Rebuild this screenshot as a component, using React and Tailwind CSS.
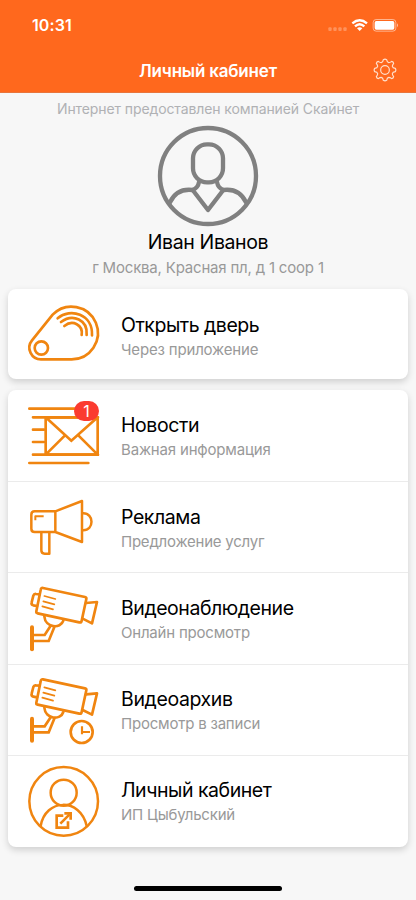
import React from "react";

function StatusBar() {
  return (
    <div className="flex h-[48px] items-start justify-between pl-8 pr-[17px] pt-[15px] text-white">
      <span className="text-[16px] font-semibold leading-[21px] tracking-[0.1px]">10:31</span>
      <svg className="mt-[2px] h-[17px] w-[72px]" viewBox="0 0 216 51" fill="none">
        <g fill="#fff" fillOpacity=".28">
          <rect x="4" y="31" width="10" height="11" rx="3" />
          <rect x="19" y="31" width="10" height="11" rx="3" />
          <rect x="34" y="31" width="10" height="11" rx="3" />
          <rect x="49" y="31" width="10" height="11" rx="3" />
        </g>
        <g stroke="#fff" strokeWidth="7">
          <path d="M76 19Q98 0 120 19" />
          <path d="M84 28Q98 15 112 28" />
        </g>
        <path d="M90 34Q98 27 106 34L98 42Z" fill="#fff" />
        <rect x="138.500" y="7.500" width="68" height="35" rx="9" stroke="#fff" strokeOpacity=".5" strokeWidth="3" />
        <rect x="143" y="12" width="59" height="26" rx="5" fill="#fff" />
        <path d="M210 19q6 6 0 12Z" fill="#fff" fillOpacity=".6" />
      </svg>
    </div>
  );
}

function GearIcon() {
  return (
    <svg className="h-6 w-6" viewBox="0 0 72 72" fill="none" stroke="#ffe0ce" strokeWidth="3.500" strokeLinejoin="round">
      <circle cx="36" cy="36" r="13" />
      <path d="M31 5Q36 2 41 5Q42 13 47 14Q51 14 56 10Q61 11 62 16Q58 21 58 25Q59 30 67 31Q70 36 67 41Q59 42 58 47Q58 51 62 56Q61 61 56 62Q51 58 47 58Q42 59 41 67Q36 70 31 67Q30 59 25 58Q21 58 16 62Q11 61 10 56Q14 51 14 47Q13 42 5 41Q2 36 5 31Q13 30 14 25Q14 21 10 16Q11 11 16 10Q21 14 25 14Q30 13 31 5Z" />
    </svg>
  );
}

function Avatar() {
  return (
    <svg className="h-[102px] w-[102px]" viewBox="51 15 306 306" fill="none" stroke="#808080" strokeWidth="13" strokeLinecap="round" strokeLinejoin="round">
      <circle cx="204" cy="168" r="144" />
      <rect x="159" y="73" width="90" height="114" rx="42" />
      <path d="M177 186Q174 204 158 210L204 270L250 210Q234 204 231 186" />
      <path d="M158 210Q110 204 90 247M250 210Q298 204 318 247" />
    </svg>
  );
}

function Icon({ viewBox, children }) {
  return (
    <svg className="h-[90px] w-[90px] shrink-0" viewBox={viewBox} fill="none" stroke="#f08510" strokeWidth="8" strokeLinecap="round" strokeLinejoin="round">
      {children}
    </svg>
  );
}

function KeyFob() {
  return (
    <Icon viewBox="72 27 270 270">
      <path d="M158 104A79 79 0 1 1 214 238H124A35 35 0 0 1 96 181Z" />
      <circle cx="124" cy="204" r="20" />
      <path d="M173 115C211 82 279 103 276 166M183 126C219 99 264 120 260 165M193 138C218 118 250 135 245 165" />
    </Icon>
  );
}

function Mail() {
  return (
    <Icon viewBox="72 15 270 270">
      <path d="M88 71H270M99 97H294M99 134H132M99 171H132M99 209H294M88 234H265" />
      <path strokeLinejoin="miter" d="M137 97H293V209H137ZM137 97L214 167L293 97M137 209L195 151M293 209L235 151" />
    </Icon>
  );
}

function Megaphone() {
  return (
    <Icon viewBox="72 6 270 270">
      <g strokeWidth="7.500">
        <path d="M104 94H166V156H104Q94 156 94 146V104Q94 94 104 94ZM166 94L246 63V186L166 156M249 100C283 99 283 152 249 151" />
        <path d="M124 157V211Q124 221 134 221H148V157" />
        <path d="M106 121V109H131" strokeLinecap="butt" strokeWidth="6" />
      </g>
    </Icon>
  );
}

function CameraShape() {
  return (
    <>
      <path d="M129 54L255 81Q260 82 259 87L245 152Q244 158 238 157L113 130Q108 129 109 124L122 60Q123 53 129 54Z" />
      <path d="M119 73L108 72Q102 71 100 77L95 97Q93 104 100 106L111 108M258 99L291 96L276 160L248 146" />
      <path d="M133 139C136 174 182 178 190 152M151 169L134 195H96M164 169L146 213H96" strokeLinejoin="miter" />
      <path d="M96 172V238" strokeWidth="12" />
      <path d="M133 78L166 87M130 94L163 103M127 109L159 118" strokeWidth="5" />
    </>
  );
}

function Camera() {
  return (
    <Icon viewBox="72 9 270 270">
      <CameraShape />
    </Icon>
  );
}

function CameraArchive() {
  return (
    <Icon viewBox="72 15 270 270">
      <g transform="translate(0 4)">
        <CameraShape />
      </g>
      <circle cx="245" cy="216" r="33" />
      <path d="M246 199V216H270M246 216V223" strokeLinecap="butt" strokeWidth="6.500" />
    </Icon>
  );
}

function Account() {
  return (
    <Icon viewBox="72 18 270 270">
      <g strokeWidth="7.500">
        <circle cx="191" cy="154" r="103" />
        <circle cx="191" cy="128" r="39" />
        <path d="M122 228C136 145 241 142 260 228" />
      </g>
      <g strokeWidth="8" strokeLinecap="butt" strokeLinejoin="miter">
        <path d="M190 197H170V233H204V214M181 221L208 194" />
        <path d="M193 190H212V209" />
      </g>
    </Icon>
  );
}

function Row({ icon, title, subtitle, badge, size, textTop = "pt-[23px]", titleSpacing, subtitleSpacing }) {
  return (
    <div className={`relative flex items-start pl-4 ${size}`}>
      {icon}
      {badge && (
        <span className="absolute left-[66px] top-[11px] flex h-5 w-[25px] items-center justify-center rounded-full bg-[#fb3b30] text-[16px] leading-5 text-white">
          {badge}
        </span>
      )}
      <div className={`ml-[7px] ${textTop}`}>
        <div className={`whitespace-nowrap text-[19.5px] leading-6 text-black ${titleSpacing}`}>{title}</div>
        <div className={`mt-[3px] whitespace-nowrap text-[15px] leading-5 text-[#999] ${subtitleSpacing}`}>{subtitle}</div>
      </div>
    </div>
  );
}

const card = "rounded-lg bg-white shadow-[0_3px_7px_rgba(0,0,0,0.16)]";

export default function App() {
  return (
    <div className="flex h-[900px] w-[416px] flex-col overflow-hidden bg-[#f7f7f7] font-['Inter','Liberation_Sans',sans-serif]">
      <header className="h-[93px] shrink-0 border-b border-[#e8753c] bg-[#ff681d]">
        <StatusBar />
        <div className="flex h-11 items-center pl-[139px] pr-[19px] text-white">
          <h1 className="flex-1 whitespace-nowrap pt-[2px] text-[17px] font-semibold leading-6 tracking-[-0.2px]">Личный кабинет</h1>
          <GearIcon />
        </div>
      </header>
      <section className="flex h-[196px] shrink-0 flex-col items-center">
        <p className="mt-[6px] whitespace-nowrap text-[14px] leading-5 tracking-[-0.1px] text-[#b0b1b4]">Интернет предоставлен компанией Скайнет</p>
        <div className="mt-[6px]">
          <Avatar />
        </div>
        <h2 className="mt-[3px] whitespace-nowrap text-[19.5px] leading-6 tracking-[-0.38px] text-black">Иван Иванов</h2>
        <p className="mt-[4px] whitespace-nowrap text-[15px] leading-5 tracking-[-0.19px] text-[#999]">г Москва, Красная пл, д 1 соор 1</p>
      </section>
      <main className="flex flex-col gap-[11px] px-2">
        <div className={card}>
          <Row size="h-[90px]" textTop="pt-[24px]" icon={<KeyFob />} title="Открыть дверь" subtitle="Через приложение" titleSpacing="tracking-[-0.48px]" subtitleSpacing="tracking-[-0.17px]" />
        </div>
        <div className={card}>
          <Row size="h-[92px] border-b border-[#ebebeb]" icon={<Mail />} title="Новости" subtitle="Важная информация" badge="1" titleSpacing="tracking-[-0.41px]" subtitleSpacing="tracking-[-0.18px]" />
          <Row size="h-[91px] border-b border-[#ebebeb]" icon={<Megaphone />} title="Реклама" subtitle="Предложение услуг" titleSpacing="tracking-[-0.43px]" subtitleSpacing="tracking-[-0.23px]" />
          <Row size="h-[92px] border-b border-[#ebebeb]" icon={<Camera />} title="Видеонаблюдение" subtitle="Онлайн просмотр" titleSpacing="tracking-[-0.45px]" subtitleSpacing="tracking-[-0.2px]" />
          <Row size="h-[91px] border-b border-[#ebebeb]" textTop="pt-[22px]" icon={<CameraArchive />} title="Видеоархив" subtitle="Просмотр в записи" titleSpacing="tracking-[-0.38px]" subtitleSpacing="tracking-[-0.21px]" />
          <Row size="h-[91px]" textTop="pt-[22px]" icon={<Account />} title="Личный кабинет" subtitle="ИП Цыбульский" titleSpacing="tracking-[-0.47px]" subtitleSpacing="tracking-[-0.2px]" />
        </div>
      </main>
      <div className="mx-auto mt-[39px] h-[5px] w-[148px] shrink-0 rounded-full bg-black" />
    </div>
  );
}
